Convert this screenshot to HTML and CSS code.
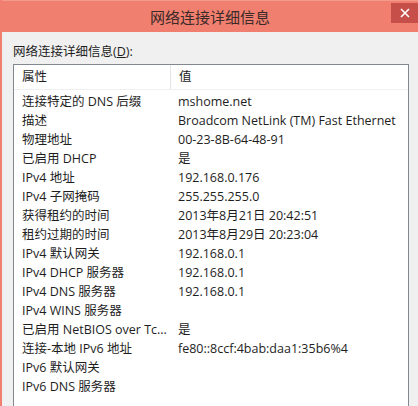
FILE: index.html
```html
<!DOCTYPE html>
<html>
<head>
<meta charset="utf-8">
<link rel="stylesheet" href="styles.css">
</head>
<body>
<div class="window">
  <div class="titlebar">
    <div class="title">网络连接详细信息</div>
    <div class="close"><svg width="10" height="10" viewBox="0 0 10 10"><path d="M1 1L9 9M9 1L1 9" stroke="#fff" stroke-width="1.6"/></svg></div>
  </div>
  <div class="content">
    <div class="label">网络连接详细信息(<u>D</u>):</div>
    <div class="list">
      <div class="head">
        <div class="hc c1">属性</div>
        <div class="hc c2">值</div>
      </div>
      <div class="rows">
        <div class="row"><span class="c1">连接特定的 DNS 后缀</span><span class="c2">mshome.net</span></div>
        <div class="row"><span class="c1">描述</span><span class="c2">Broadcom NetLink (TM) Fast Ethernet</span></div>
        <div class="row"><span class="c1">物理地址</span><span class="c2">00-23-8B-64-48-91</span></div>
        <div class="row"><span class="c1">已启用 DHCP</span><span class="c2">是</span></div>
        <div class="row"><span class="c1">IPv4 地址</span><span class="c2">192.168.0.176</span></div>
        <div class="row"><span class="c1">IPv4 子网掩码</span><span class="c2">255.255.255.0</span></div>
        <div class="row"><span class="c1">获得租约的时间</span><span class="c2">2013年8月21日 20:42:51</span></div>
        <div class="row"><span class="c1">租约过期的时间</span><span class="c2">2013年8月29日 20:23:04</span></div>
        <div class="row"><span class="c1">IPv4 默认网关</span><span class="c2">192.168.0.1</span></div>
        <div class="row"><span class="c1">IPv4 DHCP 服务器</span><span class="c2">192.168.0.1</span></div>
        <div class="row"><span class="c1">IPv4 DNS 服务器</span><span class="c2">192.168.0.1</span></div>
        <div class="row"><span class="c1">IPv4 WINS 服务器</span><span class="c2"></span></div>
        <div class="row"><span class="c1">已启用 NetBIOS over Tc...</span><span class="c2">是</span></div>
        <div class="row"><span class="c1">连接-本地 IPv6 地址</span><span class="c2">fe80::8ccf:4bab:daa1:35b6%4</span></div>
        <div class="row"><span class="c1">IPv6 默认网关</span><span class="c2"></span></div>
        <div class="row"><span class="c1">IPv6 DNS 服务器</span><span class="c2"></span></div>
      </div>
    </div>
  </div>
</div>
</body>
</html>
```

FILE: styles.css
```css
* { box-sizing: border-box; }
html, body { margin: 0; padding: 0; }
body {
  width: 418px;
  height: 406px;
  overflow: hidden;
  font-family: "Open Sans", "Noto Sans CJK SC", sans-serif;
  font-size: 12.5px;
  color: #1e1e1e;
  background: #f07f6f;
}
.window {
  height: 406px;
  display: flex;
  flex-direction: column;
  padding-left: 2px;
  background: #f07f6f;
}
.titlebar {
  height: 32px;
  flex: none;
  position: relative;
  display: flex;
  align-items: center;
  justify-content: center;
  border-top: 1px solid #f39a8d;
}
.title {
  font-family: "Noto Sans CJK SC", sans-serif;
  font-size: 15px;
  color: #3a2a28;
  padding-bottom: 1px;
}
.close {
  position: absolute;
  right: 0;
  top: 2px;
  width: 27px;
  height: 20px;
  background: #c74f4a;
  display: flex;
  align-items: center;
  justify-content: center;
}
.content {
  flex: 1;
  background: #f0f0f0;
  padding: 10px 9px 0 11px;
  display: flex;
  flex-direction: column;
}
.label {
  line-height: 18px;
  height: 22px;
  padding-top: 1px;
}
.label u { text-decoration: underline; }
.list {
  flex: 1;
  background: #fff;
  border: 1px solid #828790;
  border-bottom: none;
}
.head {
  display: flex;
  height: 25px;
  border-bottom: 1px solid #f0f0f0;
}
.hc {
  line-height: 24px;
  padding-left: 8px;
}
.head .c1 {
  width: 157px;
  border-right: 1px solid #e5e5e5;
}
.rows { padding-top: 2px; }
.row {
  display: flex;
  height: 19px;
  line-height: 19px;
  white-space: nowrap;
}
.row .c1 {
  width: 156px;
  padding-left: 8px;
  flex: none;
}
.row .c2 {
  padding-left: 8px;
}
```
